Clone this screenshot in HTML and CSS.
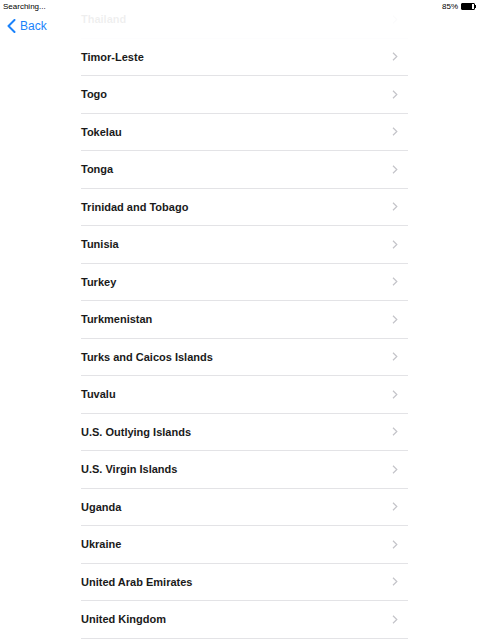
FILE: index.html
```html
<!DOCTYPE html>
<html>
<head>
<meta charset="utf-8">
<link rel="stylesheet" href="styles.css">
</head>
<body>
<header class="topbar">
  <div class="status">
    <span class="carrier">Searching...</span>
    <span class="battery-wrap"><span class="pct">85%</span><span class="battery"><span class="level"></span></span><span class="nub"></span></span>
  </div>
  <div class="nav">
    <a class="back"><svg class="back-chev" width="9" height="14" viewBox="0 0 9 14"><path d="M7.5 1 L1.5 7 L7.5 13" fill="none" stroke="#1a82fb" stroke-width="2" stroke-linecap="round" stroke-linejoin="round"/></svg><span>Back</span></a>
  </div>
</header>
<main class="list">
  <div class="row"><span>Thailand</span><svg class="chev" width="6" height="9" viewBox="0 0 6 9"><path d="M1 0.8 L4.8 4.5 L1 8.2" fill="none" stroke="#c4c4c9" stroke-width="1.2"/></svg></div>
  <div class="row"><span>Timor-Leste</span><svg class="chev" width="6" height="9" viewBox="0 0 6 9"><path d="M1 0.8 L4.8 4.5 L1 8.2" fill="none" stroke="#c4c4c9" stroke-width="1.2"/></svg></div>
  <div class="row"><span>Togo</span><svg class="chev" width="6" height="9" viewBox="0 0 6 9"><path d="M1 0.8 L4.8 4.5 L1 8.2" fill="none" stroke="#c4c4c9" stroke-width="1.2"/></svg></div>
  <div class="row"><span>Tokelau</span><svg class="chev" width="6" height="9" viewBox="0 0 6 9"><path d="M1 0.8 L4.8 4.5 L1 8.2" fill="none" stroke="#c4c4c9" stroke-width="1.2"/></svg></div>
  <div class="row"><span>Tonga</span><svg class="chev" width="6" height="9" viewBox="0 0 6 9"><path d="M1 0.8 L4.8 4.5 L1 8.2" fill="none" stroke="#c4c4c9" stroke-width="1.2"/></svg></div>
  <div class="row"><span>Trinidad and Tobago</span><svg class="chev" width="6" height="9" viewBox="0 0 6 9"><path d="M1 0.8 L4.8 4.5 L1 8.2" fill="none" stroke="#c4c4c9" stroke-width="1.2"/></svg></div>
  <div class="row"><span>Tunisia</span><svg class="chev" width="6" height="9" viewBox="0 0 6 9"><path d="M1 0.8 L4.8 4.5 L1 8.2" fill="none" stroke="#c4c4c9" stroke-width="1.2"/></svg></div>
  <div class="row"><span>Turkey</span><svg class="chev" width="6" height="9" viewBox="0 0 6 9"><path d="M1 0.8 L4.8 4.5 L1 8.2" fill="none" stroke="#c4c4c9" stroke-width="1.2"/></svg></div>
  <div class="row"><span>Turkmenistan</span><svg class="chev" width="6" height="9" viewBox="0 0 6 9"><path d="M1 0.8 L4.8 4.5 L1 8.2" fill="none" stroke="#c4c4c9" stroke-width="1.2"/></svg></div>
  <div class="row"><span>Turks and Caicos Islands</span><svg class="chev" width="6" height="9" viewBox="0 0 6 9"><path d="M1 0.8 L4.8 4.5 L1 8.2" fill="none" stroke="#c4c4c9" stroke-width="1.2"/></svg></div>
  <div class="row"><span>Tuvalu</span><svg class="chev" width="6" height="9" viewBox="0 0 6 9"><path d="M1 0.8 L4.8 4.5 L1 8.2" fill="none" stroke="#c4c4c9" stroke-width="1.2"/></svg></div>
  <div class="row"><span>U.S. Outlying Islands</span><svg class="chev" width="6" height="9" viewBox="0 0 6 9"><path d="M1 0.8 L4.8 4.5 L1 8.2" fill="none" stroke="#c4c4c9" stroke-width="1.2"/></svg></div>
  <div class="row"><span>U.S. Virgin Islands</span><svg class="chev" width="6" height="9" viewBox="0 0 6 9"><path d="M1 0.8 L4.8 4.5 L1 8.2" fill="none" stroke="#c4c4c9" stroke-width="1.2"/></svg></div>
  <div class="row"><span>Uganda</span><svg class="chev" width="6" height="9" viewBox="0 0 6 9"><path d="M1 0.8 L4.8 4.5 L1 8.2" fill="none" stroke="#c4c4c9" stroke-width="1.2"/></svg></div>
  <div class="row"><span>Ukraine</span><svg class="chev" width="6" height="9" viewBox="0 0 6 9"><path d="M1 0.8 L4.8 4.5 L1 8.2" fill="none" stroke="#c4c4c9" stroke-width="1.2"/></svg></div>
  <div class="row"><span>United Arab Emirates</span><svg class="chev" width="6" height="9" viewBox="0 0 6 9"><path d="M1 0.8 L4.8 4.5 L1 8.2" fill="none" stroke="#c4c4c9" stroke-width="1.2"/></svg></div>
  <div class="row"><span>United Kingdom</span><svg class="chev" width="6" height="9" viewBox="0 0 6 9"><path d="M1 0.8 L4.8 4.5 L1 8.2" fill="none" stroke="#c4c4c9" stroke-width="1.2"/></svg></div>
</main>
</body>
</html>
```
FILE: styles.css
```css
html, body {
  margin: 0;
  padding: 0;
  background: #ffffff;
  width: 480px;
  height: 640px;
  overflow: hidden;
  font-family: "Liberation Sans", Arial, sans-serif;
}
.topbar {
  position: absolute;
  left: 0;
  top: 0;
  width: 480px;
  height: 40px;
  background: rgba(255, 255, 255, 0.93);
  z-index: 2;
}
.status {
  display: flex;
  justify-content: space-between;
  align-items: center;
  height: 12px;
  padding: 0 4px 0 3px;
  font-size: 8px;
  color: #000;
}
.carrier {
  margin-top: 1px;
}
.battery-wrap {
  display: flex;
  align-items: center;
  margin-top: 1px;
}
.pct {
  margin-right: 3px;
}
.battery {
  width: 12px;
  height: 5px;
  border: 1px solid #000;
  border-radius: 1px;
  display: flex;
}
.level {
  width: 85%;
  height: 100%;
  background: #000;
}
.nub {
  width: 1px;
  height: 3px;
  background: #000;
}
.nav {
  display: flex;
  align-items: center;
  height: 28px;
  padding-left: 7px;
}
.back {
  display: flex;
  align-items: center;
  color: #1a82fb;
  font-size: 12px;
}
.back-chev {
  margin-right: 4px;
}
.list {
  padding-left: 81px;
  padding-top: 1px;
  width: 327px;
}
.row {
  box-sizing: border-box;
  height: 37.5px;
  border-bottom: 1px solid #e3e3e6;
  display: flex;
  align-items: center;
  justify-content: space-between;
  font-size: 11px;
  font-weight: bold;
  color: #1a1a1a;
  padding-right: 10px;
}
.chev {
  display: block;
}
```
